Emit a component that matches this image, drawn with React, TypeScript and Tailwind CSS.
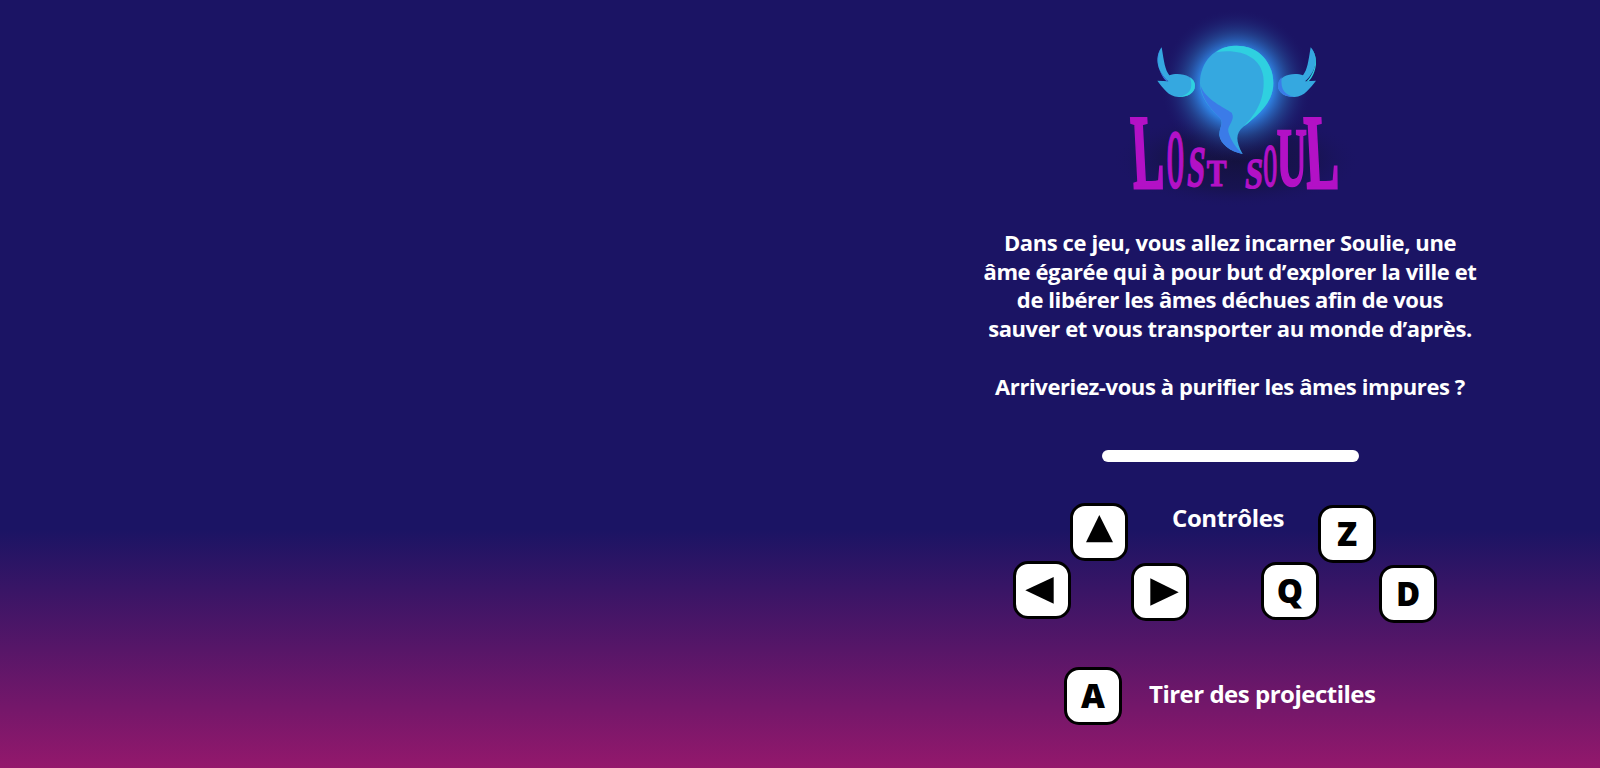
const FONT = "font-['Open_Sans','Lato',sans-serif]";

function Letter({ c, x, y, w, h, adv, skew = 0 }: { c: string; x: number; y: number; w: number; h: number; adv: number; skew?: number }) {
  // y is the top of the capital, h its height; the font size is 100 and its capitals are about 66 tall
  return (
    <text
      transform={`translate(${x + w / 2} ${y + h}) skewX(${skew}) scale(${w / adv} ${h / 66})`}
      fontFamily="'Liberation Serif', serif"
      fontWeight={700}
      fontSize={100}
      textAnchor="middle"
      fill="#b311c6"
      stroke="#b311c6"
      strokeWidth={3}
    >
      {c}
    </text>
  );
}

function Logo() {
  return (
    <svg viewBox="0 0 840 570" className="w-[280px] h-[190px] shrink-0 overflow-visible" aria-label="Lost Soul">
      <defs>
        <radialGradient id="glow">
          <stop offset="0%" stopColor="#3f9cf2" />
          <stop offset="48%" stopColor="#2f7fe0" />
          <stop offset="68%" stopColor="#26549f" stopOpacity="0.65" />
          <stop offset="100%" stopColor="#1b1464" stopOpacity="0" />
        </radialGradient>
        <radialGradient id="shade">
          <stop offset="0%" stopColor="#14123f" />
          <stop offset="60%" stopColor="#17134f" stopOpacity="0.9" />
          <stop offset="100%" stopColor="#1b1464" stopOpacity="0" />
        </radialGradient>
      </defs>
      <ellipse cx="410" cy="420" rx="375" ry="145" fill="url(#shade)" />
      <ellipse cx="410" cy="195" rx="230" ry="230" fill="url(#glow)" />
      {/* wings */}
      <path d="M185 82C192 125 195 150 208 166C235 155 282 165 285 196C286 222 258 232 235 231C205 229 190 205 172 182L205 184C175 160 160 115 185 82Z" fill="#35a8e0" />
      <path d="M285 196C286 222 258 232 235 231C262 226 283 212 270 172C280 178 285 186 285 196Z" fill="#2fd0e0" />
      <path d="M185 82C162 115 175 160 205 184L200 184C174 160 166 112 185 82Z" fill="#3b7be8" />
      <path d="M632 82C625 125 622 150 609 166C582 155 537 165 534 196C533 222 561 232 584 231C614 229 629 205 648 182L615 184C645 160 660 115 632 82Z" fill="#35a8e0" />
      <path d="M534 196C533 222 561 232 584 231C558 226 540 212 545 172C538 178 534 186 534 196Z" fill="#3b7be8" />
      <path d="M632 82C657 115 645 160 620 184L626 184C650 160 658 112 632 82Z" fill="#2fd0e0" />
      {/* soul */}
      <path d="M410 77C478 77 520 130 520 190C520 250 470 288 430 320C408 338 405 362 428 402C390 395 360 370 358 345C358 322 372 310 360 295C330 265 300 235 300 190C300 125 345 77 410 77Z" fill="#35a8e0" />
      <path d="M348 97C365 82 388 77 410 77C478 77 520 130 520 190C520 250 470 288 430 320C465 285 497 240 490 170C482 110 420 85 348 97Z" fill="#2fd0e0" />
      <path d="M302 198C318 240 372 262 395 278C408 300 380 316 385 335C392 362 410 385 428 402C390 395 360 370 358 345C358 322 372 310 360 295C330 265 305 235 302 198Z" fill="#3b7be8" />
      {/* title */}
      <Letter c="L" x={100} y={295} w={95} h={210} adv={67} skew={3} />
      <Letter c="O" x={200} y={335} w={52} h={165} adv={78} />
      <Letter c="S" x={258} y={385} w={52} h={113} adv={56} skew={-6} />
      <Letter c="T" x={320} y={420} w={60} h={77} adv={67} />
      <Letter c="S" x={432} y={420} w={53} h={85} adv={56} skew={-6} />
      <Letter c="O" x={490} y={375} w={42} h={123} adv={78} />
      <Letter c="U" x={530} y={330} w={90} h={165} adv={72} />
      <Letter c="L" x={620} y={295} w={100} h={210} adv={67} skew={3} />
    </svg>
  );
}

function Key({ children, className = "" }: { children: React.ReactNode; className?: string }) {
  return (
    <div className={`w-[58px] h-[58px] shrink-0 flex items-center justify-center rounded-[15px] border-[3px] border-black bg-white text-black ${className}`}>
      {children}
    </div>
  );
}

function Arrow({ points }: { points: string }) {
  return (
    <svg viewBox="3 3 52 52" className="w-[52px] h-[52px]">
      <polygon points={points} fill="#000" />
    </svg>
  );
}

function KeyLetter({ c }: { c: string }) {
  return <span className="text-[33px] leading-none font-extrabold [font-family:'Open_Sans',sans-serif]">{c}</span>;
}

export default function App() {
  return (
    <div className={`h-[768px] w-full overflow-hidden flex justify-end pr-[110px] bg-[linear-gradient(to_bottom,#1b1464_0%,#1b1464_69%,#93186c_100%)] ${FONT}`}>
      <div className="w-[520px] flex flex-col items-center text-white font-bold">
        <div className="mt-[20px] h-[190px] w-[280px] ml-[20px]">
          <Logo />
        </div>
        <p className="mt-[18px] text-center text-[22px] tracking-[-0.4px] leading-[28.7px] whitespace-nowrap">
          Dans ce jeu, vous allez incarner Soulie, une<br />
          âme égarée qui à pour but d’explorer la ville et<br />
          de libérer les âmes déchues afin de vous<br />
          sauver et vous transporter au monde d’après.<br />
          <br />
          Arriveriez-vous à purifier les âmes impures ?
        </p>
        <div className="mt-[50px] w-[257px] h-[11.5px] rounded-full bg-white" />
        <div className="mt-[41px] flex items-start self-start ml-[43px]">
          <Key className="mt-[58px]"><Arrow points="12.3,29.3 40.7,16 40.7,42.7" /></Key>
          <Key className="-ml-[1px]"><Arrow points="16,39.3 29.3,12 43,39.3" /></Key>
          <Key className="ml-[3px] mt-[60px]"><Arrow points="19.3,15.3 47.7,29.3 19.3,42.7" /></Key>
          <span className="-ml-[17px] mr-[2px] w-[111px] text-center text-[24px] tracking-[-0.4px] leading-[28px] mt-[1px] whitespace-nowrap">Contrôles</span>
          <Key className="-ml-[24px] mt-[59px]"><KeyLetter c="Q" /></Key>
          <Key className="-ml-[1px] mt-[2px]"><KeyLetter c="Z" /></Key>
          <Key className="ml-[3px] mt-[62px]"><KeyLetter c="D" /></Key>
        </div>
        <div className="mt-[44px] flex items-center self-start ml-[94px]">
          <Key><KeyLetter c="A" /></Key>
          <span className="ml-[27px] mb-[3px] text-[24px] tracking-[-0.5px] leading-[28px] whitespace-nowrap">Tirer des projectiles</span>
        </div>
      </div>
    </div>
  );
}
